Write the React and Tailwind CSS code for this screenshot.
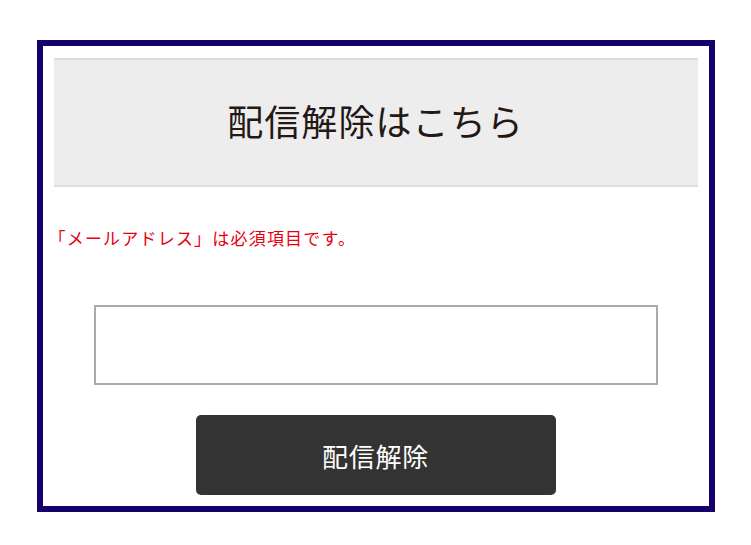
import React from 'react';

const serif = { fontFamily: '"Liberation Serif", "Noto Sans CJK JP", serif' };

const App = () => {
  return (
    <div className="w-[751px] h-[545px] bg-white pt-[40px]">
      {/* 外枠 */}
      <div className="mx-auto w-[678px] h-[472px] border-[6px] border-[#16006b] px-[11px] pt-[12px] pb-[11px] flex flex-col">
        <div className="h-[129px] bg-[#ededed] border-y-2 border-[#dddddd] flex items-center justify-center">
          <h1
            className="text-[36px] leading-none text-[#231815] tracking-[0.03em] pt-[3px]"
            style={serif}
          >
            配信解除はこちら
          </h1>
        </div>

        <p
          className="mt-[41px] -ml-[5px] text-[17px] leading-[24px] text-[#e60012] tracking-[1.2px]"
          style={serif}
        >
          「メールアドレス」は必須項目です。
        </p>

        <input
          type="text"
          className="mt-[53px] mx-auto block w-[564px] h-[80px] border-2 border-[#aaaaaa] bg-white outline-none"
        />

        <button
          className="mt-[30px] mx-auto w-[360px] h-[80px] rounded-[5px] bg-[#333333] text-white text-[26px] tracking-[0.03em]"
          style={{ fontFamily: '"Noto Sans CJK JP", sans-serif' }}
        >
          配信解除
        </button>
      </div>
    </div>
  );
};

export default App;
